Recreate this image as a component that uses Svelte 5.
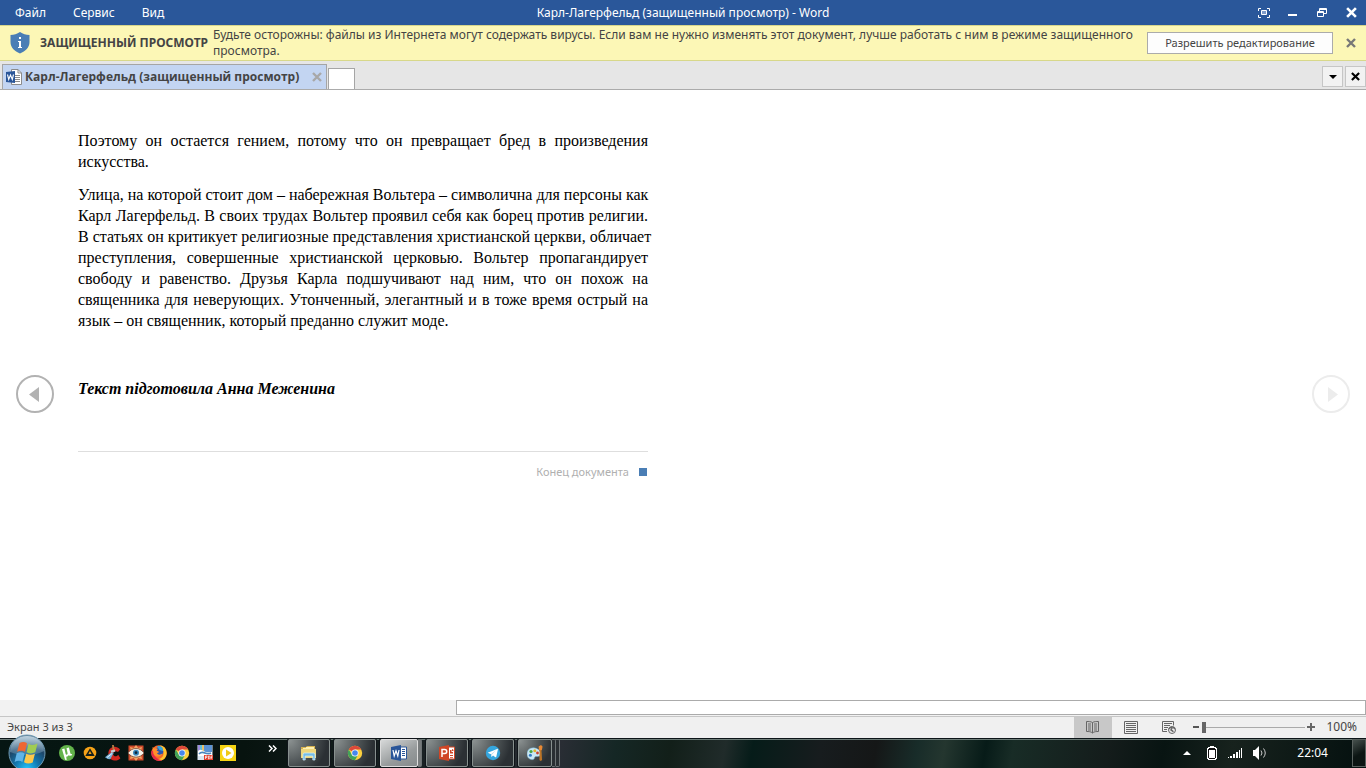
<script>
	const menus = ['Файл', 'Сервис', 'Вид']
	const paragraphs = [
		['Поэтому он остается гением, потому что он превращает бред в произведения', 'искусства.'],
		[
			'Улица, на которой стоит дом – набережная Вольтера – символична для персоны как',
			'Карл Лагерфельд. В своих трудах Вольтер проявил себя как борец против религии.',
			'В статьях он критикует религиозные представления христианской церкви, обличает',
			'преступления, совершенные христианской церковью. Вольтер пропагандирует',
			'свободу и равенство. Друзья Карла подшучивают над ним, что он похож на',
			'священника для неверующих. Утонченный, элегантный и в тоже время острый на',
			'язык – он священник, который преданно служит моде.'
		]
	]
	const pinned = [
		{ id: 'utorrent', title: 'µTorrent' },
		{ id: 'aimp', title: 'AIMP' },
		{ id: 'ccleaner', title: 'CCleaner' },
		{ id: 'viewer', title: 'FastStone Image Viewer' },
		{ id: 'firefox', title: 'Firefox' },
		{ id: 'chrome', title: 'Chrome' },
		{ id: 'pdf', title: 'PDF' },
		{ id: 'player', title: 'PotPlayer' }
	]
	const tasks = [
		{ id: 'explorer', title: 'Проводник' },
		{ id: 'chrome', title: 'Chrome' },
		{ id: 'word', title: 'Word', active: true, stack: 1 },
		{ id: 'powerpoint', title: 'PowerPoint' },
		{ id: 'telegram', title: 'Telegram' },
		{ id: 'paint', title: 'Paint', stack: 2 }
	]

	let view = $state('read')
	let zoom = $state(0)
	let showBar = $state(true)
</script>

{#snippet cross(size)}
	<svg width={size} height={size} viewBox="0 0 10 10"><path d="M1 1l8 8M9 1L1 9" stroke="currentColor" stroke-width="2.4" /></svg>
{/snippet}

{#snippet appIcon(id, size)}
	<svg width={size} height={size} viewBox="0 0 16 16">
		{#if id === 'utorrent'}
			<circle cx="8" cy="8" r="8" fill="#63b34b" />
			<path d="M3 4.2l2.4-.7 1.2 5.2c.3 1.4 2.2 1.2 2-.4L7.5 3.2l2.4-.7 1.6 6.3 1.7.5-.6 1.3-2.1.1-.7-.7c-.5 1.1-1.4 1.7-2.6 1.7l.5 3.3-1.6-.2z" fill="#fff" />
		{:else if id === 'aimp'}
			<circle cx="8" cy="8" r="6.3" fill="#f6a318" />
			<path d="M8 3.2L12.7 11H3.3z" fill="#14201c" />
			<path d="M8 6l1.6 3H6.4z" fill="#f6a318" />
		{:else if id === 'ccleaner'}
			<path d="M15 4.500C12 .5 6 1 4 5.200c-2 4.900.8 9.900 5.500 10.300 2.300.2 4.300-.6 5.900-2.300l-2.200-3.500c-2 2.600-4.400 1.600-5-.2-.7-2.700 2.300-4.500 4.800-2.400z" fill="#d0281f" />
			<path d="M7 0h1.800l1 5.500-2 .5z" fill="#b47c45" />
			<path d="M5.500 5.400l4.300-.9.600 2-4 1.600z" fill="#c6ccd0" />
			<path d="M6 7.500L0 12.200l2.800 1.700 2.500.3 3.500-6.400z" fill="#76b0d6" />
			<path d="M2 12.500l5-4" stroke="#e3f0f8" />
		{:else if id === 'viewer'}
			<path d="M.5.5h15v15H.5z" fill="#cf4a2b" />
			<path d="M8 0l2.200 3.100L14 2l-1 3.700L16 8l-3 2.300L14 14l-3.800-1.100L8 16l-2.200-3.100L2 14l1-3.700L0 8l3-2.300L2 2l3.800 1.100z" fill="#f3a564" />
			<path d="M0 8c4-6 12-6 16 0-4 5.500-12 5.500-16 0z" fill="#f7f2e8" stroke="#5d372b" stroke-width=".7" />
			<circle cx="8" cy="7.7" r="3" fill="#3586bd" />
			<circle cx="8" cy="7.7" r="1.4" fill="#102739" />
		{:else if id === 'firefox'}
			<circle cx="8" cy="8" r="7.800" fill="#f9682a" />
			<path d="M9 .5c6 0 8.500 8 5 12.500-3 3.500-7 3-9 1 5 1 8-2.500 7.500-6.500C12 4.500 10.500 2.500 9 .5z" fill="#ffc52d" />
			<path d="M.5 6c-.8 4 1 8 5 9.500 2 .7 4 .5 5.500-.3C6 14.500 2.500 11 2.200 6z" fill="#e42a48" />
			<circle cx="8" cy="6.500" r="4.300" fill="#2b56ad" />
			<path d="M6 1.500c2-.8 4-.3 5.500 1.200L12 6 8.500 5z" fill="#35a5dc" />
			<path d="M1.500 2l1.800 1.600C4.500 3 6 3 7 4L5.500 5.400 8.300 7 6 8.300c.8 1.700 3.200 2 5.500.3-1 3.400-6.500 4.400-9 .4z" fill="#ff8e2b" />
		{:else if id === 'chrome'}
			<circle cx="8" cy="8" r="7.2" fill="#fcd03e" />
			<path d="M8 8L1.800 4.400A7.200 7.200 0 0 1 14.200 4.400H8z" fill="#dc493a" />
			<path d="M1.800 4.400A7.200 7.200 0 0 0 8 15.200l3.100-5.400L8 8 4.900 9.800z" fill="#40a35a" />
			<circle cx="8" cy="8" r="3.5" fill="#fff" />
			<circle cx="8" cy="8" r="2.8" fill="#4687ed" />
		{:else if id === 'pdf'}
			<path d="M.5 0h15v15H.5z" fill="#dbe8f3" />
			<path d="M1 0h3v8H1z" fill="#9d8de0" /><path d="M3 0h2v7H3z" fill="#62bfdd" /><path d="M5 0h2v7H5z" fill="#e7c46e" /><path d="M7 0h8v7H7z" fill="#5b93d3" />
			<path d="M1 6c4-4 7 4 14 1v4H1z" fill="#fff" />
			<path d="M2 9c4-5 7 2 12-1" fill="none" stroke="#4b88bd" stroke-width="1.6" />
			<path d="M7 10h9v5H7z" fill="#e5412f" />
			<path d="M8.5 14v-3h1.400v1.500H8.500M11.500 11v3h.7l.8-.8v-1.400l-.8-.8zM14.200 14v-3h1.300M14.200 12.500h1" stroke="#fff" stroke-width=".7" fill="none" />
		{:else if id === 'player'}
			<path d="M0 0h16v16H0z" fill="#f6d414" />
			<circle cx="8" cy="8" r="6" fill="#fff" />
			<path d="M6 4.500L11.500 8 6 11.500z" fill="#f0c913" />
		{:else if id === 'explorer'}
			<path d="M0 2h5l1-1h8v12H1z" fill="#d7b350" />
			<path d="M2 3h3V2h8v10H2z" fill="#fff0b1" />
			<path d="M0 4h15v9H0z" fill="#efd77c" />
			<path d="M2 15V9.500Q2 8 3.500 8h9Q14 8 14 9.500V15h-2.200v-4H4.200v4z" fill="#76bde7" stroke="#d5f0fc" stroke-width=".7" />
		{:else if id === 'word' || id === 'powerpoint'}
			<path d="M9 2h6.500v12H9z" fill="#fff" stroke={id === 'word' ? '#2a5699' : '#d04626'} />
			<path d="M0 2l10-2v16L0 14z" fill={id === 'word' ? '#2a5699' : '#d04626'} />
			{#if id === 'word'}
				<path d="M2 5l1.200 6L5 5.800 6.800 11 8 5" fill="none" stroke="#fff" stroke-width="1.2" />
				<path d="M11 4.500h3M11 6.500h3M11 8.500h3M11 10.500h3" stroke="#2a5699" />
			{:else}
				<path d="M3 12V4.500h2.700q2 0 2 2t-2 2H3" fill="none" stroke="#fff" stroke-width="1.5" />
				<path d="M11 5h1.500v2H14v1.500h-3zM13 4q1.600.2 1.600 2H13zM11 10h3v1h-3zM11 12h3v.8h-3z" fill="#d04626" />
			{/if}
		{:else if id === 'telegram'}
			<circle cx="8" cy="8" r="7.2" fill="#35a6de" />
			<path d="M2.700 7.700l9.500-3.800c.5-.2.8.1.7.6l-1.600 7.300c-.1.5-.5.6-.9.4L8 10.400l-1.200 1.300c-.2.2-.5.1-.5-.2L6 9.200z" fill="#fff" />
			<path d="M6 9.200L11.200 5 6.800 9.800v1.900z" fill="#b5d7e9" />
		{:else if id === 'paint'}
			<path d="M8 3C3 2 0 5.200 0 9c0 4 3.200 6 6 5.600 2-.3 1-2.600 2.600-3 2-.4 4.500.5 5-1.800C14.300 6.500 11.700 3.700 8 3z" fill="#c9e7f5" stroke="#6ba7c4" stroke-width=".5" />
			<circle cx="4" cy="6.5" r="1.6" fill="#45a64a" /><circle cx="7.8" cy="5.7" r="1.5" fill="#e2b52c" /><circle cx="3.4" cy="10.3" r="1.5" fill="#327ac5" /><circle cx="10.5" cy="8" r="1.4" fill="#c94131" />
			<path d="M12.600 5h1.800l.7 10-1.400 1-1.300-1z" fill="#bd7426" />
			<path d="M12 5l-.4-3.500L14 0l1.500 1.500-.7 3.700z" fill="#e98934" />
		{/if}
	</svg>
{/snippet}

<div class="window">
	<header class="titleBar">
		<nav class="menus">
			{#each menus as item}
				<button type="button">{item}</button>
			{/each}
		</nav>
		<h1>Карл-Лагерфельд (защищенный просмотр) - Word</h1>
		<div class="winButtons">
			<button type="button" aria-label="Во весь экран">
				<svg width="12" height="10" viewBox="0 0 12 10">
					<path d="M.5 3V.5H3M9 .5h2.500V3M11.500 7v2.500H9M3 9.500H.5V7" fill="none" stroke="#fff" />
					<path d="M3.500 2.500h5v4h-5z" fill="#7f9cca" stroke="#fff" />
				</svg>
			</button>
			<button type="button" aria-label="Свернуть">
				<svg width="10" height="10" viewBox="0 0 10 10"><path d="M0 6h9v2H0z" fill="#fff" /></svg>
			</button>
			<button type="button" aria-label="Свернуть в окно">
				<svg width="10" height="10" viewBox="0 0 10 10">
					<path d="M2.500 3V.5h7v5H7M2 1.500h8M.5 3.500h6v5h-6zM0 4.500h7" fill="none" stroke="#fff" />
				</svg>
			</button>
			<button type="button" aria-label="Закрыть">{@render cross(11)}</button>
		</div>
	</header>

	{#if showBar}
		<section class="messageBar">
			<svg width="20" height="22" viewBox="0 0 20 22">
				<path d="M10 0c3 2 6 3 9.500 3v7c0 5.500-4 9-9.500 11.500C4.500 19 .5 15.500.5 10V3C4 3 7 2 10 0z" fill="#4a7eb5" />
				<path d="M9 5h2v2H9zM8 9h3v6h1v1H8v-1h1v-5H8z" fill="#fff" />
			</svg>
			<strong>ЗАЩИЩЕННЫЙ ПРОСМОТР</strong>
			<p>Будьте осторожны: файлы из Интернета могут содержать вирусы. Если вам не нужно изменять этот документ, лучше работать с ним в режиме защищенного просмотра.</p>
			<button type="button" class="enable">Разрешить редактирование</button>
			<button type="button" class="closeBar" aria-label="Закрыть сообщение" onclick={() => (showBar = false)}>{@render cross(10)}</button>
		</section>
	{/if}

	<div class="tabs">
		<div class="tab">
			<svg width="16" height="16" viewBox="0 0 16 16">
				<path d="M5.500.5H12L15.500 4v11.500h-10z" fill="#fff" stroke="#8b8b8b" />
				<path d="M12 .5V4h3.500M9 6.500h5M9 8.500h5M9 10.500h5M7 12.500h7" fill="none" stroke="#8b8b8b" />
				<path d="M0 3l9-1v12l-9-1z" fill="#2a5699" />
				<path d="M1.500 5.500l1.200 5L4.500 6l1.800 4.500 1.200-5" fill="none" stroke="#fff" stroke-width="1.1" />
			</svg>
			<button type="button" class="tabName">Карл-Лагерфельд (защищенный просмотр)</button>
			<button type="button" class="tabClose" aria-label="Закрыть вкладку">{@render cross(10)}</button>
		</div>
		<button type="button" class="newTab" aria-label="Новая вкладка"></button>
		<div class="tabTools">
			<button type="button" aria-label="Список вкладок"><svg width="8" height="4" viewBox="0 0 8 4"><path d="M0 0h8L4 4z" /></svg></button>
			<button type="button" aria-label="Закрыть">{@render cross(9)}</button>
		</div>
	</div>

	<main>
		<button type="button" class="pageBtn" aria-label="Предыдущий экран">
			<svg width="38" height="38" viewBox="0 0 38 38"><circle cx="19" cy="19" r="18" fill="none" stroke="currentColor" stroke-width="2" /><path d="M23 12v15l-10-7.500z" fill="currentColor" /></svg>
		</button>
		<article>
			{#each paragraphs as lines}
				<p>
					{#each lines as line}<span>{line}</span>{/each}
				</p>
			{/each}
			<p class="author">Текст підготовила Анна Меженина</p>
			<footer>Конец документа <i></i></footer>
		</article>
		<button type="button" class="pageBtn next" aria-label="Следующий экран" disabled>
			<svg width="38" height="38" viewBox="0 0 38 38"><circle cx="19" cy="19" r="18" fill="none" stroke="currentColor" stroke-width="2" /><path d="M16 12v15l10-7.500z" fill="currentColor" /></svg>
		</button>
	</main>

	<div class="scrollTrack"><div class="scrollThumb"></div></div>

	<div class="statusBar">
		<span class="screen">Экран 3 из 3</span>
		<button type="button" class="view" class:active={view === 'read'} aria-label="Режим чтения" onclick={() => (view = 'read')}>
			<svg width="14" height="13" viewBox="0 0 14 13" fill="none" stroke="#666">
				<path d="M6.500 1.500C5 .5 2.500.5.5.5v10c2 0 4.500 0 6 1.500 1.500-1.500 4-1.500 6-1.500V.5c-2 0-4.500 0-6 1zV12M2 3h3M2 5h3M2 7h3M2 9h3M8 3h3M8 5h3M8 7h3M8 9h3" />
			</svg>
		</button>
		<button type="button" class="view" class:active={view === 'print'} aria-label="Разметка страницы" onclick={() => (view = 'print')}>
			<svg width="14" height="13" viewBox="0 0 14 13" fill="none" stroke="#666"><path d="M.5.5h13v12H.5zM2 2.500h10M2 4.500h10M2 6.500h10M2 8.500h10M2 10.500h10" /></svg>
		</button>
		<button type="button" class="view" class:active={view === 'web'} aria-label="Веб-документ" onclick={() => (view = 'web')}>
			<svg width="14" height="13" viewBox="0 0 14 13" fill="none" stroke="#666">
				<path d="M5 10.500H.5V.5h11v4M2 2.500h8M2 4.500h6M2 6.500h4M2 8.500h3" />
				<circle cx="10" cy="9" r="3.5" fill="#eee" />
				<path d="M7 8c1-2 3-2 3-1s-1 1-1 2 2 0 2 2M11 6l2 2" stroke-width="1.5" />
			</svg>
		</button>
		<div class="zoomBox">
			<button type="button" aria-label="Уменьшить" onclick={() => (zoom = Math.max(0, zoom - 10))}><svg width="10" height="10" viewBox="0 0 10 10"><path d="M1 4h6v2H1z" fill="#555" /></svg></button>
			<input type="range" min="0" max="100" bind:value={zoom} aria-label="Масштаб" />
			<button type="button" aria-label="Увеличить" onclick={() => (zoom = Math.min(100, zoom + 10))}><svg width="10" height="10" viewBox="0 0 10 10"><path d="M2 4h3V1h2v3h3v2H7v3H5V6H2z" fill="#666" /></svg></button>
		</div>
		<span class="percent">100%</span>
	</div>

	<div class="taskbar">
		<button type="button" class="start" aria-label="Пуск">
			<svg width="38" height="38" viewBox="0 0 38 38">
				<defs>
					<radialGradient id="orb" cx=".5" cy=".95" r=".85"><stop offset="0" stop-color="#25c8ff" /><stop offset=".4" stop-color="#1377ae" /><stop offset=".75" stop-color="#1e4668" /><stop offset="1" stop-color="#5d788e" /></radialGradient>
					<linearGradient id="shine" x2="0" y2="1"><stop stop-color="#c9dce8" stop-opacity=".9" /><stop offset="1" stop-color="#7ba0b9" stop-opacity=".35" /></linearGradient>
				</defs>
				<circle cx="19" cy="19" r="18" fill="url(#orb)" stroke="#6d9ab4" />
				<path d="M2 18C2 8 10 2 19 2s17 6 17 15c-9 5-24 5-34 1z" fill="url(#shine)" />
				<path d="M11.500 9c3-1.700 5.500-1.300 7.500.2L17 18c-2.300-1.700-4.500-1.700-7.900-.2z" fill="#ee6632" />
				<path d="M20.500 9.700c3 1.700 5.900 1.500 9-.2l-2.200 8.800c-3 1.500-6.100 1.500-8.700-.1z" fill="#a1cc52" />
				<path d="M8.700 19.200c3-1.600 5.700-1.300 7.900.2l-2.200 8.700c-2.300-1.600-4.500-1.700-7.800-.2z" fill="#61b4e8" />
				<path d="M18.200 19.700c2.700 1.600 5.700 1.500 8.700 0l-2.200 8.700c-3.100 1.500-6 1.400-8.700-.2z" fill="#fdc84b" />
			</svg>
		</button>
		<div class="pinned">
			{#each pinned as app (app.id)}
				<button type="button" title={app.title} aria-label={app.title}>{@render appIcon(app.id, 16)}</button>
			{/each}
		</div>
		<button type="button" class="more" aria-label="Еще"><svg width="9" height="7" viewBox="0 0 9 7"><path d="M1 .5l3 3-3 3M5 .5l3 3-3 3" fill="none" stroke="#fff" stroke-width="1.5" /></svg></button>
		<div class="tasks">
			{#each tasks as task (task.id)}
				<div class="task">
					<button type="button" class:active={task.active} class:stacked={task.stack} class:many={task.stack === 2} title={task.title} aria-label={task.title}>{@render appIcon(task.id, 16)}</button>
					{#each { length: task.stack || 0 } as _}
						<span class="edge" class:light={task.active}></span>
					{/each}
				</div>
			{/each}
		</div>
		<div class="tray">
			<button type="button" aria-label="Скрытые значки"><svg width="8" height="4" viewBox="0 0 8 4"><path d="M4 0l4 4H0z" fill="#fff" /></svg></button>
			<button type="button" aria-label="Батарея">
				<svg width="10" height="14" viewBox="0 0 10 14"><path d="M3 0h4v1h2v1h1v11H9v1H1v-1H0V2h1V1h2z" fill="#fff" /><path d="M1 3h1V2h6v1h1v9H8v1H2v-1H1z" fill="#111" /><path d="M2 4h6v8H2z" fill="#fff" /></svg>
			</button>
			<button type="button" aria-label="Сеть">
				<svg width="14" height="12" viewBox="0 0 14 12"><path d="M0 10h1v1H0zM2 9h2v2H2zM5 7h2v4H5zM8 5h2v6H8zM11 3h1v8h-1zM13 1h1v10h-1z" fill="#fff" /></svg>
			</button>
			<button type="button" aria-label="Громкость">
				<svg width="14" height="14" viewBox="0 0 14 14"><path d="M0 4h2l4-4v14l-4-4H0z" fill="#fff" /><path d="M8 4.500q2 2.500 0 5M10.500 2.500q3.500 4.500 0 9" fill="none" stroke="#ccc" /></svg>
			</button>
			<time>22:04</time>
		</div>
		<button type="button" class="desktop" aria-label="Свернуть все окна"></button>
	</div>
</div>

<style>
	:global(body) {
		margin: 0;
		overflow: hidden;
	}

	.window {
		height: 100vh;
		display: flex;
		flex-direction: column;
		background: #fff;
		color: #444;
		font: 12px/16px "Noto Sans", "Open Sans", sans-serif;
	}

	button {
		display: flex;
		align-items: center;
		justify-content: center;
		margin: 0;
		padding: 0;
		border: 0;
		background: none;
		color: inherit;
		font: inherit;
	}

	svg {
		flex-shrink: 0;
		display: block;
	}

	.titleBar {
		display: grid;
		grid-template-columns: 1fr auto 1fr;
		align-items: center;
		height: 25px;
		flex-shrink: 0;
		background: #2a579a;
		color: #fff;
	}

	.menus {
		display: flex;
		gap: 27px;
		padding-left: 15px;
	}

	h1 {
		margin: 0;
		font-size: 12px;
		font-weight: 400;
	}

	.winButtons {
		display: flex;
		justify-content: flex-end;
		align-items: center;
		padding-right: 5px;
	}

	.winButtons button {
		width: 29px;
		height: 20px;
	}

	.winButtons button:last-child {
		width: 20px;
		margin-left: 5px;
	}

	.messageBar {
		display: flex;
		align-items: center;
		box-sizing: border-box;
		height: 36px;
		flex-shrink: 0;
		padding: 0 10px;
		background: #fcf7b6;
		border-top: 1px solid #d5d58c;
		border-bottom: 1px solid #d8d88a;
	}

	.messageBar strong {
		margin: 0 5px 0 10px;
		white-space: nowrap;
	}

	.messageBar p {
		flex: 1;
		margin: 0;
	}

	.enable {
		width: 186px;
		height: 22px;
		margin: 0 13px 0 8px;
		flex-shrink: 0;
		border: 1px solid #ababab;
		background: #fdfdfd;
		font-size: 11px;
	}

	.closeBar {
		color: #777;
	}

	.tabs {
		display: flex;
		align-items: flex-end;
		box-sizing: border-box;
		height: 29px;
		flex-shrink: 0;
		padding-left: 2px;
		background: #e6e6e6;
		border-bottom: 1px solid #ababab;
	}

	.tab {
		display: flex;
		align-items: center;
		gap: 3px;
		box-sizing: border-box;
		width: 325px;
		height: 25px;
		padding: 0 4px 0 3px;
		border: 1px solid #a5a5a5;
		border-bottom: 0;
		background: #c3d5f2;
	}

	.tabName {
		font-family: "Open Sans", "Noto Sans", sans-serif;
		font-weight: 700;
		white-space: nowrap;
	}

	.tabClose {
		margin-left: auto;
		color: #a8a8a8;
	}

	.newTab {
		width: 27px;
		height: 21px;
		margin-left: 1px;
		border: 1px solid #a5a5a5;
		border-bottom: 0;
		background: #fff;
	}

	.tabTools {
		display: flex;
		gap: 2px;
		margin: 0 0 2px auto;
		color: #000;
	}

	.tabTools button {
		width: 21px;
		height: 21px;
		border: 1px solid #c6c6c6;
		background: #f2f2f2;
	}

	main {
		flex: 1;
		min-height: 0;
		display: flex;
		align-items: center;
		padding: 0 16px 2px;
	}

	.pageBtn {
		color: #b2b2b2;
	}

	.pageBtn.next {
		margin-left: auto;
		color: #ececec;
	}

	article {
		align-self: flex-start;
		width: 570px;
		margin-left: 24px;
		padding-top: 40px;
		color: #000;
		font: 16px/21px "Liberation Serif", "Times New Roman", serif;
	}

	article p {
		margin: 0 0 12px;
	}

	article span {
		display: block;
		white-space: nowrap;
		text-align-last: justify;
	}

	article span:last-child {
		text-align-last: left;
	}

	article .author {
		margin: 47px 0 52px;
		font-weight: 700;
		font-style: italic;
	}

	article footer {
		display: flex;
		justify-content: flex-end;
		align-items: center;
		gap: 10px;
		padding: 12px 1px 0 0;
		border-top: 1px solid #dedede;
		color: #b0b0b0;
		font: 11px/16px "Noto Sans", "Open Sans", sans-serif;
	}

	footer i {
		width: 8px;
		height: 8px;
		background: #4a7eb5;
	}

	.scrollTrack {
		height: 16px;
		flex-shrink: 0;
		display: flex;
		justify-content: flex-end;
		background: #f2f2f2;
	}

	.scrollThumb {
		box-sizing: border-box;
		width: 66.6%;
		height: 15px;
		border: 1px solid #ababab;
		background: #fff;
	}

	.statusBar {
		display: flex;
		align-items: center;
		box-sizing: border-box;
		height: 22px;
		flex-shrink: 0;
		padding: 0 9px 1px 0;
		border-top: 1px solid #c6c6c6;
		background: #f0f0f0;
		font-size: 11px;
	}

	.screen {
		margin: 0 auto 0 7px;
	}

	.view {
		width: 38px;
		height: 21px;
	}

	.view.active {
		background: #c8c8c8;
	}

	.zoomBox {
		display: flex;
		align-items: center;
		margin-left: 4px;
	}

	input[type='range'] {
		appearance: none;
		width: 103px;
		height: 12px;
		margin: 0;
		background: linear-gradient(#aaa, #aaa) center / 100% 1px no-repeat;
	}

	input[type='range']::-webkit-slider-thumb {
		appearance: none;
		width: 4px;
		height: 11px;
		background: #666;
	}

	.percent {
		width: 36px;
		margin-left: 6px;
		text-align: right;
		font-size: 12px;
	}

	.taskbar {
		display: flex;
		align-items: center;
		box-sizing: border-box;
		height: 30px;
		flex-shrink: 0;
		padding-bottom: 1px;
		border-top: 1px solid #0c1518;
		background: linear-gradient(#6d7c78 1px, transparent 1px), linear-gradient(100deg, #061613 0%, #07130f 18%, #292d34 41%, #152725 45%, #121f19 49%, #202b2a 53%, #061c19 55%, #171c1e 60%, #151717 64%, #182c29 67%, #24362f 69%, #071b18 72%, #182c26 74%, #141c1b 81%, #081412 85%, #17221d 90%, #04100f 100%);
	}

	.start {
		width: 38px;
		height: 28px;
		margin-left: 8px;
	}

	.pinned {
		display: flex;
		gap: 7px;
		margin-left: 13px;
	}

	.more {
		align-self: flex-start;
		margin: 6px 0 0 32px;
	}

	.tasks {
		display: flex;
		gap: 4px;
		margin-left: 11px;
	}

	.task {
		display: flex;
		height: 28px;
	}

	.task button {
		box-sizing: border-box;
		width: 42px;
		border: 1px solid #87908e;
		border-radius: 2px;
		background: radial-gradient(circle at 0 0, #8d9393, #474d4f 55%, #2b3034 80%);
		box-shadow: 0 0 0 1px #10151a;
	}

	.task button.active {
		border-color: #ddd;
		background: linear-gradient(150deg, #d7d9d9, #979b9c 60%, #858a8b);
	}

	.task button.stacked {
		width: 38px;
	}

	.task button.many {
		width: 34px;
	}

	.edge {
		box-sizing: border-box;
		width: 4px;
		border: solid #6d7375;
		border-width: 1px 1px 1px 0;
		border-radius: 0 2px 2px 0;
		background: #292e32;
	}

	.edge.light {
		background: #777b7c;
	}

	.tray {
		display: flex;
		align-items: center;
		gap: 11px;
		margin-left: auto;
		color: #fff;
	}

	.tray button:first-child {
		margin-right: 5px;
	}

	time {
		margin: 0 24px 0 19px;
	}

	.desktop {
		box-sizing: border-box;
		width: 14px;
		height: 28px;
		border: 1px solid #59615e;
		background: linear-gradient(150deg, #46504d, #0c1513 55%);
	}
</style>
